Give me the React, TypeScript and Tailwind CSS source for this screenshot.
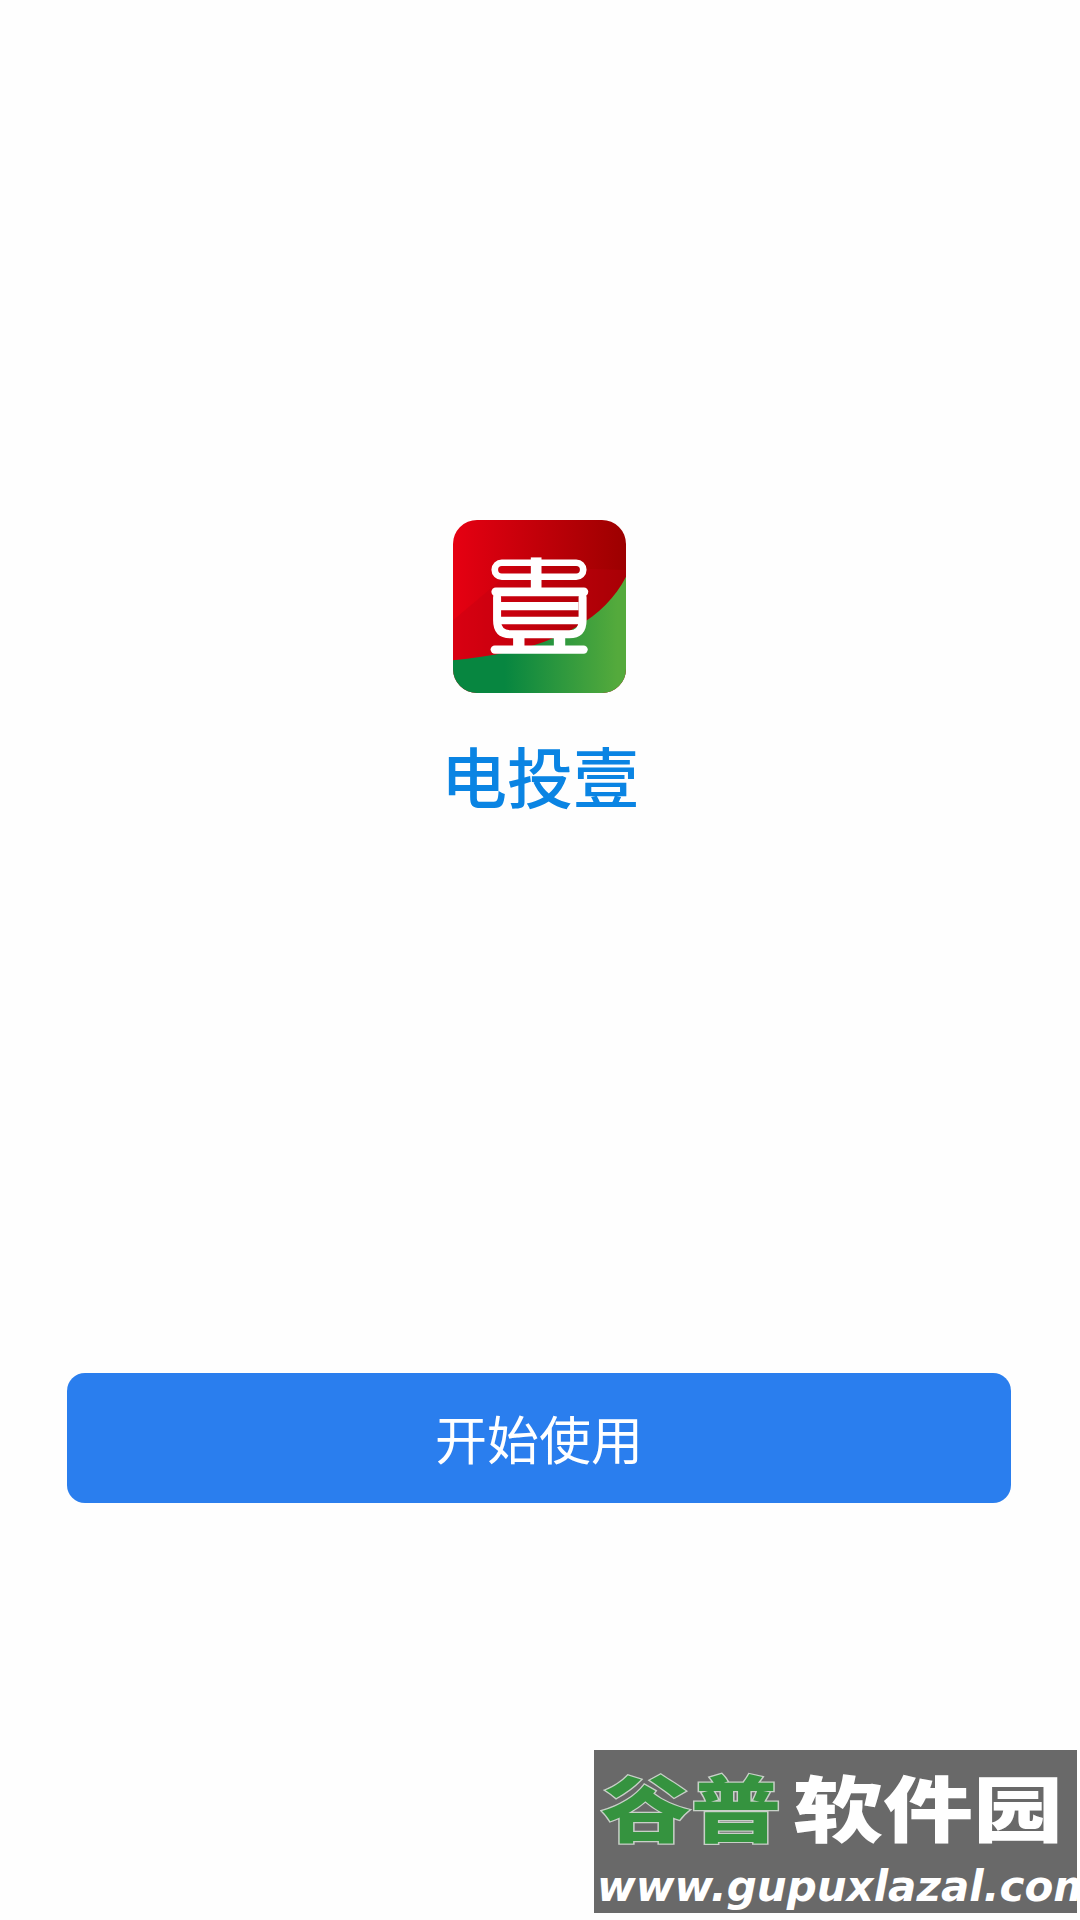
import React from 'react';

const cjk = "font-['Noto_Sans_CJK_SC','Noto_Sans',sans-serif]";

export default function App() {
  return (
    <div className={`relative h-[1920px] w-[1080px] overflow-hidden bg-[#fefefe] ${cjk}`}>
      <div className="flex flex-col items-center pt-[520px]">
        <AppLogo />
        <h1 className="mt-[41px] text-[66px] leading-[80px] font-medium text-[#0a84e3]">电投壹</h1>
      </div>

      <div className="mt-[559px] pl-[67px]">
        <button className="flex h-[130px] w-[944px] items-center justify-center rounded-[18px] bg-[#2a7eee] text-[52px] leading-none text-white">
          开始使用
        </button>
      </div>

      <Watermark />
    </div>
  );
}

function AppLogo() {
  return (
    <svg viewBox="0 0 518 518" className="-ml-[2px] h-[173px] w-[173px]">
      <defs>
        <linearGradient id="red" x1="0" y1="0" x2="1" y2="0">
          <stop offset="0" stopColor="#e60012" />
          <stop offset="1" stopColor="#9c0000" />
        </linearGradient>
        <linearGradient id="green" x1="0" y1="0" x2="1" y2="0">
          <stop offset="0.3" stopColor="#078640" />
          <stop offset="0.95" stopColor="#54aa3c" />
        </linearGradient>
      </defs>
      <rect width="518" height="518" rx="72" fill="url(#red)" />
      <path d="M0 300 L190 140 L518 150 L518 175 C 470 290 330 400 0 420 Z" fill="#c00010" opacity="0.35" />
      <path d="M0 420 C 200 402 430 345 518 170 L518 446 A72 72 0 0 1 446 518 L72 518 A72 72 0 0 1 0 446 Z" fill="url(#green)" />
      <g fill="none" stroke="#fff" strokeLinecap="round" strokeLinejoin="round">
        <path d="M249 128 L146 128 A21 21 0 0 0 146 170 L249 170 M249 128 L369 128 A21 21 0 0 1 369 170 L249 170" strokeWidth="20" />
        <path d="M249 112 L249 205" strokeWidth="32" strokeLinecap="butt" />
        <path d="M128 215 L392 215" strokeWidth="26" />
        <path d="M132 232 L132 300 Q132 342 172 342 L348 342 Q388 342 388 300 L388 232" strokeWidth="24" />
        <path d="M132 258 L376 258" strokeWidth="25" strokeLinecap="butt" />
        <path d="M132 301 L388 301" strokeWidth="22" strokeLinecap="butt" />
        <path d="M197 345 L197 385 M319 345 L319 385" strokeWidth="34" strokeLinecap="butt" />
        <path d="M125 388 L391 388" strokeWidth="25" />
      </g>
    </svg>
  );
}

function Watermark() {
  return (
    <div className="absolute top-[1750px] left-[594px] h-[163px] w-[483px] bg-[#696969]">
      <div className="flex h-[112px] origin-top scale-y-[0.8] pt-[24px] pl-[7px] text-[90px] leading-[90px] font-black">
        <span className="text-[#35933f] [-webkit-text-stroke:3px_#c8d0c8] [paint-order:stroke_fill]">谷普</span>
        <span className="ml-[12px] text-white">软件园</span>
      </div>
      <div className="pl-[3px] font-['DejaVu_Sans',sans-serif] text-[42px] leading-[50px] font-bold whitespace-nowrap text-white italic">
        www.gupuxlazal.com
      </div>
    </div>
  );
}
